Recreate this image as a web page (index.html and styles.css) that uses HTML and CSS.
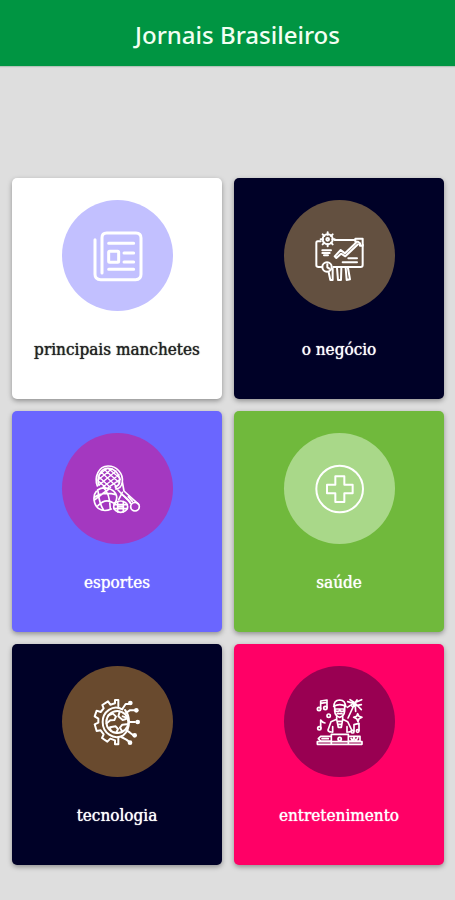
FILE: index.html
```html
<!DOCTYPE html>
<html lang="pt-BR">
<head>
<meta charset="utf-8">
<meta name="viewport" content="width=device-width, initial-scale=1">
<title>Jornais Brasileiros</title>
<link rel="stylesheet" href="styles.css">
</head>
<body>
<header class="topbar"><h1>Jornais Brasileiros</h1></header>
<main class="grid">
  <a class="card headlines" href="#manchetes">
    <span class="disc"><svg viewBox="0 0 225 210" aria-hidden="true" stroke-width="9">
      <path d="M66 156V50Q66 36 80 36H168Q183 36 183 51V160Q183 176 167 176H62Q45 176 45 160V56M86 67H161M86 145H161M132 96H161M132 123H161"/>
      <rect x="86" y="91" width="30" height="33" rx="3"/>
    </svg></span>
    <span class="label">principais manchetes</span>
  </a>
  <a class="card business" href="#negocio">
    <span class="disc"><svg viewBox="4 0 225 210" aria-hidden="true" stroke-width="6">
      <path d="M60 61H51Q47 61 47 66V133Q47 138 54 138H63M102 57H163M186 71V132Q186 138 180 138H98"/>
      <circle cx="81" cy="55" r="15"/><circle cx="81" cy="55" r="4"/>
      <path d="M81 34V41M81 69V76M60 55H67M95 55H102M66 40L71 45M91 65L96 70M66 70L71 65M91 45L96 40"/>
      <path d="M65 88H91M65 96H87M70 103H82"/>
      <path d="M102 106L120 87L133 97L166 65M107 111L121 98L134 106L172 70M102 106L107 111"/>
      <path d="M164 53H186V74H178V67L171 62H164Z"/>
      <path d="M143 112H169M126 124H169"/>
      <circle cx="79" cy="138" r="14"/><path d="M80 130V139L86 143"/>
      <path d="M84 154L89 177H96V143M109 141L112 177H121L122 141M135 141L138 177L148 175L142 141"/>
    </svg></span>
    <span class="label">o negócio</span>
  </a>
  <a class="card sports" href="#esportes">
    <span class="disc"><svg viewBox="0 0 225 210" aria-hidden="true" stroke-width="5">
      <path d="M52 96C42 69 56 36 84 36C110 36 130 58 127 84Q124 104 107 105M57 94C49 70 62 43 84 43C107 43 121 65 119 83Q118 95 106 98M127 84L132 111L176 151M106 99L125 120L151 145"/>
      <path stroke-width="4" d="M64 55L109 97M72 46L119 87M84 43L120 73M54 66L92 101M54 80L76 100M58 92L108 51M54 78L96 44M69 99L117 62M85 100L121 76M57 62L82 43"/>
      <path d="M53 108C72 94 103 105 109 124Q113 136 104 149M49 112C37 125 41 152 55 163Q72 175 94 165M53 108C57 117 53 140 70 167M43 130Q68 111 108 122M70 101Q89 116 91 164M54 155Q77 129 104 149M87 105Q67 119 42 139"/>
      <ellipse cx="122" cy="158" rx="21" ry="17"/>
      <path d="M102 152H142M102 164H142M113 143V173M130 143V173M113 158H130M127 115L116 137M126 121L142 135"/>
      <circle cx="165" cy="158" r="13"/><path d="M151 148L145 138M157 142L145 128"/>
    </svg></span>
    <span class="label">esportes</span>
  </a>
  <a class="card health" href="#saude">
    <span class="disc"><svg viewBox="4 0 225 210" aria-hidden="true" stroke-width="6">
      <circle cx="117" cy="105" r="70"/>
      <path d="M104 67H131V92H156V118H131V144H104V118H79V92H104Z"/>
    </svg></span>
    <span class="label">saúde</span>
  </a>
  <a class="card tech" href="#tecnologia">
    <span class="disc"><svg viewBox="0 0 225 210" aria-hidden="true" stroke-width="6">
      <path d="M115 58V39H105V49L91 53L84 43L67 54L71 64L62 75L50 71L44 88L55 95V107L44 112L50 132L62 130L71 142L66 153L82 164L91 155L105 160V172H115V153"/>
      <path d="M127 67C98 51 68 75 68 105C68 137 100 161 130 145M135 69Q147 83 147 105Q147 130 130 145"/>
      <circle cx="112" cy="105" r="33"/>
      <path d="M85 85L99 80L108 89L103 99L91 100L80 109M119 74L115 88L128 99L138 96M128 88L140 92M92 131L90 121L107 118L114 126L109 137M140 112L127 113L120 122L126 132"/>
      <path d="M127 66L137 51H146M138 78L149 70H163M147 105H165M140 130L150 137L160 145M124 150L139 158L147 164"/>
      <g class="solid"><circle cx="151" cy="48" r="7"/><circle cx="169" cy="70" r="7"/><circle cx="173" cy="105" r="7"/><circle cx="164" cy="145" r="7"/><circle cx="150" cy="167" r="7"/></g>
    </svg></span>
    <span class="label">tecnologia</span>
  </a>
  <a class="card fun" href="#entretenimento">
    <span class="disc"><svg viewBox="4 0 225 210" aria-hidden="true" stroke-width="5">
      <path d="M60 65V42L79 39V62M60 49L79 46M60 122V99Q65 107 73 108"/>
      <circle cx="55" cy="66" r="5"/><circle cx="74" cy="63" r="5"/><circle cx="56" cy="124" r="5"/><circle cx="84" cy="86" r="5"/>
      <path d="M100 59Q99 40 117 39Q135 40 134 59M99 58Q117 48 136 58M102 59V72Q103 87 117 91Q131 87 132 72V59M104 66H130V73H120L117 69L114 73H104ZM110 80H124"/>
      <path d="M108 89V97L91 104L82 129Q82 135 92 135M126 89V97L141 104L153 129Q153 135 143 135M108 97L113 121H122L126 97M113 103H121M114 112H121M96 119V136M139 119V136"/>
      <path d="M92 171V142H143V171M50 172H184V164H50ZM92 148H60L53 155L60 162H90M143 148H178V162H145M64 155H83M151 154L156 161L160 152L165 161L171 153"/>
      <circle cx="117" cy="156" r="5"/>
      <path d="M141 44L158 49L183 38M148 38L163 48L182 68M163 48L142 93M163 48L165 73M154 58L182 53M169 39L159 54M140 61L154 52"/>
      <path d="M171 80L175 88L184 91L175 95L172 104L168 95L159 91L168 88ZM160 113L175 109V130M160 113V132"/>
      <circle cx="171" cy="132" r="4"/><circle cx="156" cy="134" r="4"/>
    </svg></span>
    <span class="label">entretenimento</span>
  </a>
</main>
</body>
</html>
```
FILE: styles.css
```css
* { box-sizing: border-box; }
body {
  margin: 0;
  min-height: 100vh;
  background: #dedede;
  font-family: "DejaVu Serif Condensed", "DejaVu Serif", serif;
}
.topbar {
  display: flex;
  align-items: center;
  justify-content: center;
  height: 66px;
  padding: 4px 0 0 20px;
  background: #009542;
  box-shadow: 0 1px 1px #b4c4ba;
  color: #f2fff2;
}
.topbar h1 {
  margin: 0;
  font-family: "Noto Sans", sans-serif;
  font-size: 24px;
  font-weight: 500;
  line-height: 32px;
}
.grid {
  display: grid;
  grid-template-columns: 1fr 1fr;
  gap: 12px;
  padding: 112px 11px 35px 12px;
}
.card {
  display: flex;
  flex-direction: column;
  align-items: center;
  gap: 26px;
  padding: 22px 8px 38px;
  border-radius: 5px;
  box-shadow: 0 2px 5px rgba(0, 0, 0, 0.35);
  color: #fff;
  text-decoration: none;
}
.disc {
  display: flex;
  align-items: center;
  justify-content: center;
  width: 111px;
  height: 111px;
  border-radius: 50%;
}
.disc svg {
  width: 75px;
  height: 70px;
  fill: none;
  stroke: #fff;
  stroke-linecap: round;
  stroke-linejoin: round;
}
.disc .solid { fill: #fff; stroke: none; }
.label {
  font-size: 17px;
  line-height: 24px;
  text-shadow: 0 0 1px currentColor;
  white-space: nowrap;
}
.headlines { background: #fff; color: #222; }
.headlines .disc { background: #c2c0ff; }
.business, .tech { background: #000127; }
.business .disc { background: #635040; }
.sports { background: #6a66ff; }
.sports .disc { background: #a438c0; }
.health { background: #70b93c; }
.health .disc { background: #a9d889; }
.tech .disc { background: #694a2e; }
.fun { background: #ff0066; }
.fun .disc { background: #990052; }
```
